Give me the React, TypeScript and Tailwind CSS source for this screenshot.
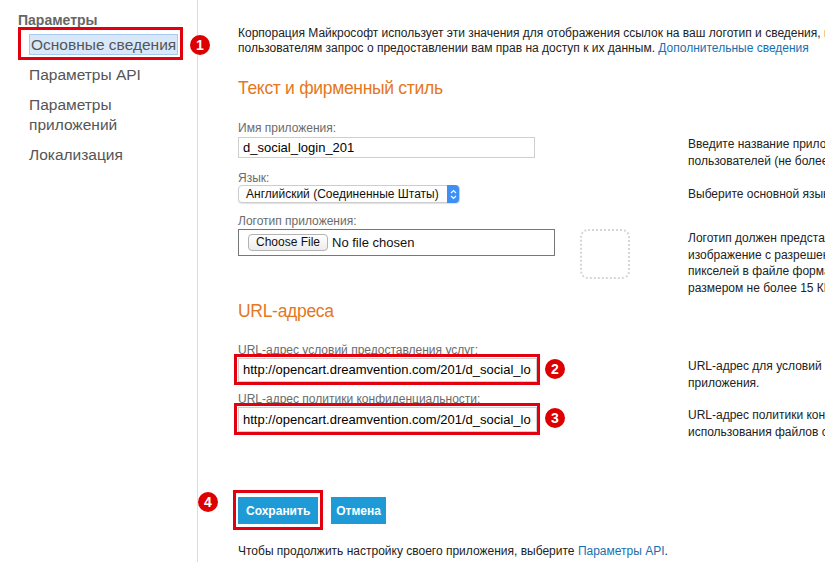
import type { ReactNode } from "react";

const Badge = ({ n }: { n: number }) => (
  <span className="flex h-[20px] w-[20px] items-center justify-center rounded-full bg-[#dd0000] text-[14px] font-bold leading-none text-white">
    {n}
  </span>
);

const Row = ({
  children,
  desc,
}: {
  children: ReactNode;
  desc: ReactNode;
}) => (
  <div className="flex items-start">
    <div className="w-[450px] shrink-0">{children}</div>
    {/* описание справа не влияет на высоту строки */}
    <div className="h-0 whitespace-nowrap pt-[15px] text-[12px] leading-[17px] text-[#222]">
      {desc}
    </div>
  </div>
);

const Label = ({ children }: { children: ReactNode }) => (
  <div className="text-[12px] leading-[14px] text-[#6b6b6b]">{children}</div>
);

const Heading = ({ children }: { children: ReactNode }) => (
  <h2 className="text-[17.5px] leading-[24px] tracking-[-0.3px] text-[#e5771e]">
    {children}
  </h2>
);

const UrlInput = ({ n, h }: { n: number; h: string }) => (
  <div className="relative mt-[1px] w-[299px]">
    <div
      className={`flex ${h} items-center overflow-hidden whitespace-nowrap border border-[#cfcfcf] px-[4px] text-[13px] text-black`}
    >
      http://opencart.dreamvention.com/201/d_social_lo
    </div>
    <div className="pointer-events-none absolute -bottom-[3px] -left-[4px] -right-[3px] -top-[4px] border-[3px] border-[#e2000f]" />
    <div className="absolute left-[307px] top-[1px]">
      <Badge n={n} />
    </div>
  </div>
);

export default function App() {
  return (
    <div className="flex h-[562px] w-[825px] overflow-hidden bg-white font-['Liberation_Sans',Arial,sans-serif] text-[#222]">
      {/* Боковое меню */}
      <aside className="w-[198px] shrink-0 border-r border-[#dcdcdc] pl-[18px] pt-[12px]">
        <div className="text-[14px] font-bold leading-[16px] text-[#666]">
          Параметры
        </div>
        <ul className="mt-[7px] flex flex-col gap-[10px] pl-[11px] text-[15.5px] leading-[20px] text-[#555]">
          <li className="relative">
            <span className="border border-[#a9c9ee] bg-[#d7e8fb] px-[1px] py-[1px]">
              Основные сведения
            </span>
            <div className="pointer-events-none absolute -left-[11px] -top-[8px] h-[33px] w-[165px] border-[3px] border-[#e2000f]" />
            <div className="absolute left-[161px] top-0">
              <Badge n={1} />
            </div>
          </li>
          <li>Параметры API</li>
          <li>
            Параметры
            <br />
            приложений
          </li>
          <li>Локализация</li>
        </ul>
      </aside>

      {/* Основная часть */}
      <main className="min-w-0 flex-1 overflow-hidden pl-[40px] pt-[26px]">
        <p className="whitespace-nowrap text-[12px] leading-[15px]">
          Корпорация Майкрософт использует эти значения для отображения ссылок
          на ваш логотип и сведения, и показывает
          <br />
          пользователям запрос о предоставлении вам прав на доступ к их данным.{" "}
          <span className="text-[#1670b0]">Дополнительные сведения</span>
        </p>

        <div className="mt-[20px]">
          <Heading>Текст и фирменный стиль</Heading>
        </div>

        <div className="mt-[21px]">
          <Row
            desc={
              <>
                Введите название приложения, которое будет показано
                <br />
                пользователей (не более 40 символов).
              </>
            }
          >
            <Label>Имя приложения:</Label>
            <div className="mt-[2px] flex h-[21px] w-[297px] items-center border border-[#cfcfcf] px-[4px] text-[13px] text-black">
              d_social_login_201
            </div>
          </Row>
        </div>

        <div className="mt-[13px]">
          <Row desc={<>Выберите основной язык приложения.</>}>
            <Label>Язык:</Label>
            <div className="flex h-[18px] w-[222px] items-center justify-between rounded-[4px] border border-[#cdcdcd] bg-white pl-[7px] shadow-[0_1px_1px_rgba(0,0,0,0.12)]">
              <span className="text-[12px] leading-none text-[#111]">
                Английский (Соединенные Штаты)
              </span>
              <span className="flex h-[18px] w-[12px] items-center justify-center rounded-r-[4px] bg-[#3d8ff4]">
                <svg width="7" height="11" viewBox="0 0 7 11">
                  <path
                    d="M1 4 L3.5 1.5 L6 4 M1 7 L3.5 9.5 L6 7"
                    fill="none"
                    stroke="white"
                    strokeWidth="1.2"
                  />
                </svg>
              </span>
            </div>
          </Row>
        </div>

        <div className="mt-[11px]">
          <Row
            desc={
              <div className="pt-[1px] leading-[16.5px]">
                Логотип должен представлять собой
                <br />
                изображение с разрешением 48 на 48
                <br />
                пикселей в файле формата JPG, PNG или GIF
                <br />
                размером не более 15 КБ.
              </div>
            }
          >
            <div className="flex items-start">
              <div>
                <Label>Логотип приложения:</Label>
                <div className="mt-[1px] flex h-[27px] w-[317px] items-center border border-[#777] pl-[9px]">
                  <span className="rounded-[4px] border border-[#b3b3b3] bg-gradient-to-b from-white to-[#ececec] px-[7px] text-[12px] leading-[15px] text-[#111]">
                    Choose File
                  </span>
                  <span className="ml-[4px] text-[13px] text-[#111]">
                    No file chosen
                  </span>
                </div>
              </div>
              <div className="ml-[25px] mt-[15px] h-[50px] w-[50px] rounded-[8px] border-2 border-dotted border-[#d6d6d6]" />
            </div>
          </Row>
        </div>

        <div className="mt-[20px]">
          <Heading>URL-адреса</Heading>
        </div>

        <div className="mt-[20px]">
          <Row
            desc={
              <>
                URL-адрес для условий предоставления услуг
                <br />
                приложения.
              </>
            }
          >
            <Label>URL-адрес условий предоставления услуг:</Label>
            <UrlInput n={2} h="h-[24px]" />
          </Row>
        </div>

        <div className="mt-[10px]">
          <Row
            desc={
              <>
                URL-адрес политики конфиденциальности и
                <br />
                использования файлов cookie приложения.
              </>
            }
          >
            <Label>URL-адрес политики конфиденциальности:</Label>
            <UrlInput n={3} h="h-[25px]" />
          </Row>
        </div>

        <div className="mt-[65px] flex items-center gap-[13px]">
          <div className="relative">
            <button className="h-[27px] bg-[#1e9bd7] px-[8px] text-[12px] font-bold text-white">
              Сохранить
            </button>
            <div className="pointer-events-none absolute -bottom-[6px] -left-[5px] -right-[5px] -top-[7px] border-[3px] border-[#e2000f]" />
            <div className="absolute -left-[40px] -top-[5px]">
              <Badge n={4} />
            </div>
          </div>
          <button className="h-[27px] bg-[#1e9bd7] px-[5px] text-[12px] font-bold text-white">
            Отмена
          </button>
        </div>

        <p className="mt-[19px] whitespace-nowrap text-[12px] leading-[16px]">
          Чтобы продолжить настройку своего приложения, выберите{" "}
          <span className="text-[#1670b0]">Параметры API</span>.
        </p>
      </main>
    </div>
  );
}
